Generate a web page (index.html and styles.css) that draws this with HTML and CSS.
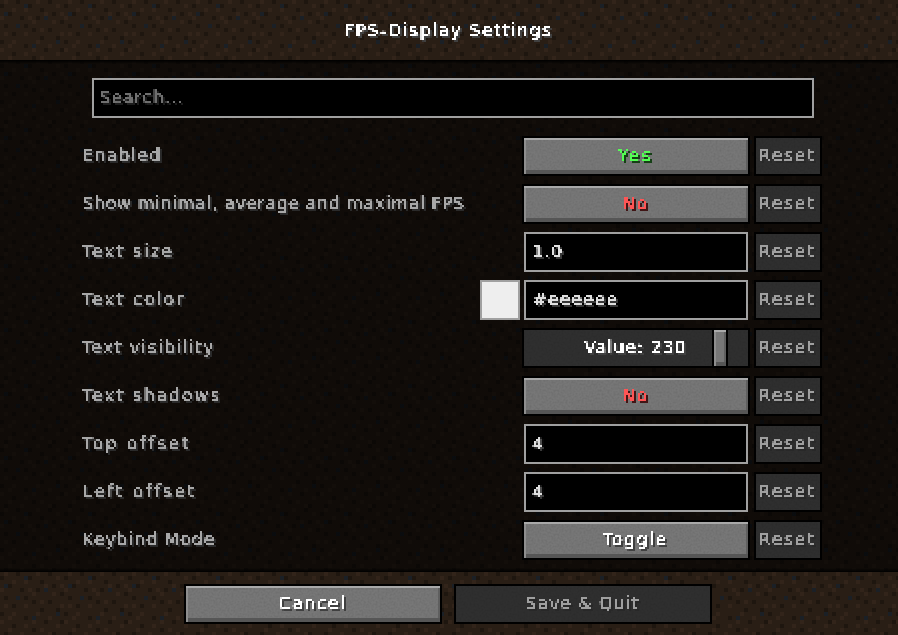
FILE: index.html
```html
<!DOCTYPE html>
<html>
<head>
  <title>FPS-Display Settings</title>
  <link rel="stylesheet" href="styles.css">
</head>
<body>
  <svg class="filters" width="0" height="0">
    <filter id="pixel" x="-4" y="-4" width="520" height="40" filterUnits="userSpaceOnUse" color-interpolation-filters="sRGB">
      <feFlood x="0" y="0" width="1" height="1" flood-color="#000"/>
      <feComposite width="2" height="2"/>
      <feTile result="grid"/>
      <feComposite in="SourceGraphic" in2="grid" operator="in"/>
      <feConvolveMatrix order="2" kernelMatrix="1 1 1 1" divisor="1" targetX="0" targetY="0" preserveAlpha="false"/>
      <feComponentTransfer result="blocks">
        <feFuncA type="linear" slope="6" intercept="-0.7"/>
      </feComponentTransfer>
      <feOffset dx="2" dy="2"/>
      <feColorMatrix type="matrix" values=".25 0 0 0 0  0 .25 0 0 0  0 0 .25 0 0  0 0 0 1 0" result="shadow"/>
      <feMerge>
        <feMergeNode in="shadow"/>
        <feMergeNode in="blocks"/>
      </feMerge>
    </filter>
  </svg>

  <header class="top-bar"><span class="mc title">FPS-Display Settings</span></header>

  <main class="list">
    <div class="search"><span class="mc placeholder">Search...</span></div>

    <div class="rows">
      <div class="row">
        <span class="label"><span class="mc snug">Enabled</span></span>
        <div class="btn"><span class="mc yes">Yes</span></div>
        <div class="reset"><span class="mc">Reset</span></div>
      </div>
      <div class="row">
        <span class="label"><span class="mc tight">Show minimal, average and maximal FPS</span></span>
        <div class="btn"><span class="mc no">No</span></div>
        <div class="reset"><span class="mc">Reset</span></div>
      </div>
      <div class="row">
        <span class="label"><span class="mc roomy">Text size</span></span>
        <div class="field"><span class="mc">1.0</span></div>
        <div class="reset"><span class="mc">Reset</span></div>
      </div>
      <div class="row">
        <span class="label"><span class="mc roomy">Text color</span></span>
        <div class="swatch"></div>
        <div class="field"><span class="mc">#eeeeee</span></div>
        <div class="reset"><span class="mc">Reset</span></div>
      </div>
      <div class="row">
        <span class="label"><span class="mc snug">Text visibility</span></span>
        <div class="slider"><span class="mc">Value: 230</span><div class="handle"></div></div>
        <div class="reset"><span class="mc">Reset</span></div>
      </div>
      <div class="row">
        <span class="label"><span class="mc roomy">Text shadows</span></span>
        <div class="btn"><span class="mc no">No</span></div>
        <div class="reset"><span class="mc">Reset</span></div>
      </div>
      <div class="row">
        <span class="label"><span class="mc wide-set">Top offset</span></span>
        <div class="field"><span class="mc">4</span></div>
        <div class="reset"><span class="mc">Reset</span></div>
      </div>
      <div class="row">
        <span class="label"><span class="mc wide-set">Left offset</span></span>
        <div class="field"><span class="mc">4</span></div>
        <div class="reset"><span class="mc">Reset</span></div>
      </div>
      <div class="row">
        <span class="label"><span class="mc">Keybind Mode</span></span>
        <div class="btn"><span class="mc">Toggle</span></div>
        <div class="reset"><span class="mc">Reset</span></div>
      </div>
    </div>
  </main>

  <footer class="bottom-bar">
    <div class="btn wide"><span class="mc">Cancel</span></div>
    <div class="reset wide"><span class="mc">Save &amp; Quit</span></div>
  </footer>
</body>
</html>
```

FILE: styles.css
```css
:root {
  --dirt: url("data:image/svg+xml,%3Csvg xmlns='http://www.w3.org/2000/svg' width='64' height='64' viewBox='0 0 16 16' shape-rendering='crispEdges' fill='none'%3E%3Crect width='16' height='16' fill='%23291e15'/%3E%3Cpath stroke='%2332241a' d='M1 .5h1M9 .5h1M14 1.5h1M3 2.5h1M6 2.5h1M11 3.5h1M15 3.5h1M0 4.5h1M7 4.5h1M13 5.5h1M8 5.5h1M10 7.5h1M1 8.5h1M6 8.5h1M15 8.5h1M3 10.5h1M9 10.5h1M12 11.5h1M2 11.5h1M0 12.5h1M8 12.5h1M6 13.5h1M14 13.5h1M2 14.5h1M10 14.5h1M5 15.5h1M12 15.5h1'/%3E%3Cpath stroke='%231e160f' d='M4 .5h1M12 .5h1M0 1.5h1M7 1.5h1M10 2.5h1M2 3.5h1M13 3.5h1M5 4.5h1M9 4.5h1M15 5.5h1M1 6.5h1M6 6.5h1M8 7.5h1M12 7.5h1M3 8.5h1M10 9.5h1M0 10.5h1M14 9.5h1M6 11.5h1M11 12.5h1M15 12.5h1M3 13.5h1M8 14.5h1M1 15.5h1M13 15.5h1'/%3E%3Cpath stroke='%231b2026' d='M6 1.5h1M1 3.5h1M11 4.5h1M4 6.5h1M14 10.5h1M8 11.5h1'/%3E%3C/svg%3E");
  --noise: url("data:image/svg+xml,%3Csvg xmlns='http://www.w3.org/2000/svg' width='200' height='60'%3E%3Cfilter id='n'%3E%3CfeTurbulence type='fractalNoise' baseFrequency='.5' numOctaves='2'/%3E%3CfeColorMatrix values='0 0 0 0 0 0 0 0 0 0 0 0 0 0 0 1.2 0 0 0 -.45'/%3E%3C/filter%3E%3Crect width='200' height='60' filter='url(%23n)' opacity='.14'/%3E%3C/svg%3E");
}

* {
  box-sizing: border-box;
}

html, body {
  height: 100%;
}

body {
  margin: 0;
  display: flex;
  flex-direction: column;
  overflow: hidden;
  font-family: "DejaVu Sans", sans-serif;
  font-size: 17px;
  letter-spacing: 1.1px;
  color: #fff;
  background-color: #000;
}

.filters {
  position: absolute;
}

.mc {
  display: inline-block;
  white-space: nowrap;
  line-height: 20px;
  filter: url(#pixel);
}

/* Header and footer */
.top-bar {
  height: 60px;
  flex: none;
  display: flex;
  align-items: center;
  justify-content: center;
  padding-top: 2px;
  background-image: var(--dirt);
}

.title {
  letter-spacing: 1.7px;
}

.bottom-bar {
  height: 63px;
  flex: none;
  display: flex;
  justify-content: center;
  gap: 12px;
  padding: 12px 2px 0 0;
  background-image: var(--dirt);
}

/* Scrolling list */
.list {
  flex: 1;
  padding-top: 18px;
  background-image:
    linear-gradient(#000, transparent 4px),
    linear-gradient(to top, #000, transparent 4px),
    linear-gradient(rgba(0, 0, 0, 0.62), rgba(0, 0, 0, 0.62)),
    var(--dirt);
}

.search {
  width: 722px;
  height: 40px;
  margin-left: 92px;
  padding: 0 6px;
  display: flex;
  align-items: center;
  border: 2px solid #a0a0a0;
  background-color: #000;
}

.placeholder {
  color: #707070;
}

.rows {
  margin-top: 18px;
  display: flex;
  flex-direction: column;
  gap: 8px;
}

.row {
  height: 40px;
  padding: 0 76px 0 83px;
  display: flex;
  align-items: center;
}

.label {
  flex: 1;
  color: #a8a8a8;
}

.tight {
  letter-spacing: 0.8px;
}

.snug {
  letter-spacing: 1.5px;
}

.roomy {
  letter-spacing: 2.1px;
}

.wide-set {
  letter-spacing: 2.6px;
}

/* Controls */
.btn,
.reset,
.slider {
  height: 40px;
  border: 2px solid #000;
  display: flex;
  align-items: center;
  justify-content: center;
}

.btn {
  width: 228px;
  background-color: #777;
  background-image: var(--noise);
  box-shadow:
    inset 0 2px #a9a9a9,
    inset 2px 0 #8e8e8e,
    inset 0 -4px #565656,
    inset -2px 0 #5f5f5f;
}

.btn .mc {
  letter-spacing: 1.7px;
}

.btn .yes {
  letter-spacing: 2.5px;
}

.reset {
  width: 68px;
  margin-left: 4px;
  background-color: #2f2f2f;
  background-image: var(--noise);
  color: #a0a0a0;
  letter-spacing: 2px;
}

.reset.wide,
.btn.wide {
  width: 258px;
  margin-left: 0;
}

.reset.wide {
  letter-spacing: 1.1px;
}

.yes {
  color: #55ff55;
}

.no {
  color: #ff5555;
}

.field {
  width: 224px;
  height: 40px;
  margin: 0 2px;
  padding: 0 7px;
  display: flex;
  align-items: center;
  border: 2px solid #a0a0a0;
  background-color: #000;
  color: #e0e0e0;
  letter-spacing: 1.3px;
}

.swatch {
  width: 40px;
  height: 40px;
  margin-right: 2px;
  border: 2px solid #a0a0a0;
  background-color: #eee;
}

.slider {
  width: 228px;
  position: relative;
  background-color: #2f2f2f;
  background-image: var(--noise);
  letter-spacing: 1.2px;
}

.handle {
  position: absolute;
  top: 0;
  left: 188px;
  width: 16px;
  height: 36px;
  border-left: 2px solid #000;
  border-right: 2px solid #000;
  background-color: #777;
  box-shadow:
    inset 0 2px #a9a9a9,
    inset 2px 0 #8e8e8e,
    inset 0 -4px #565656,
    inset -2px 0 #5f5f5f;
}
```
